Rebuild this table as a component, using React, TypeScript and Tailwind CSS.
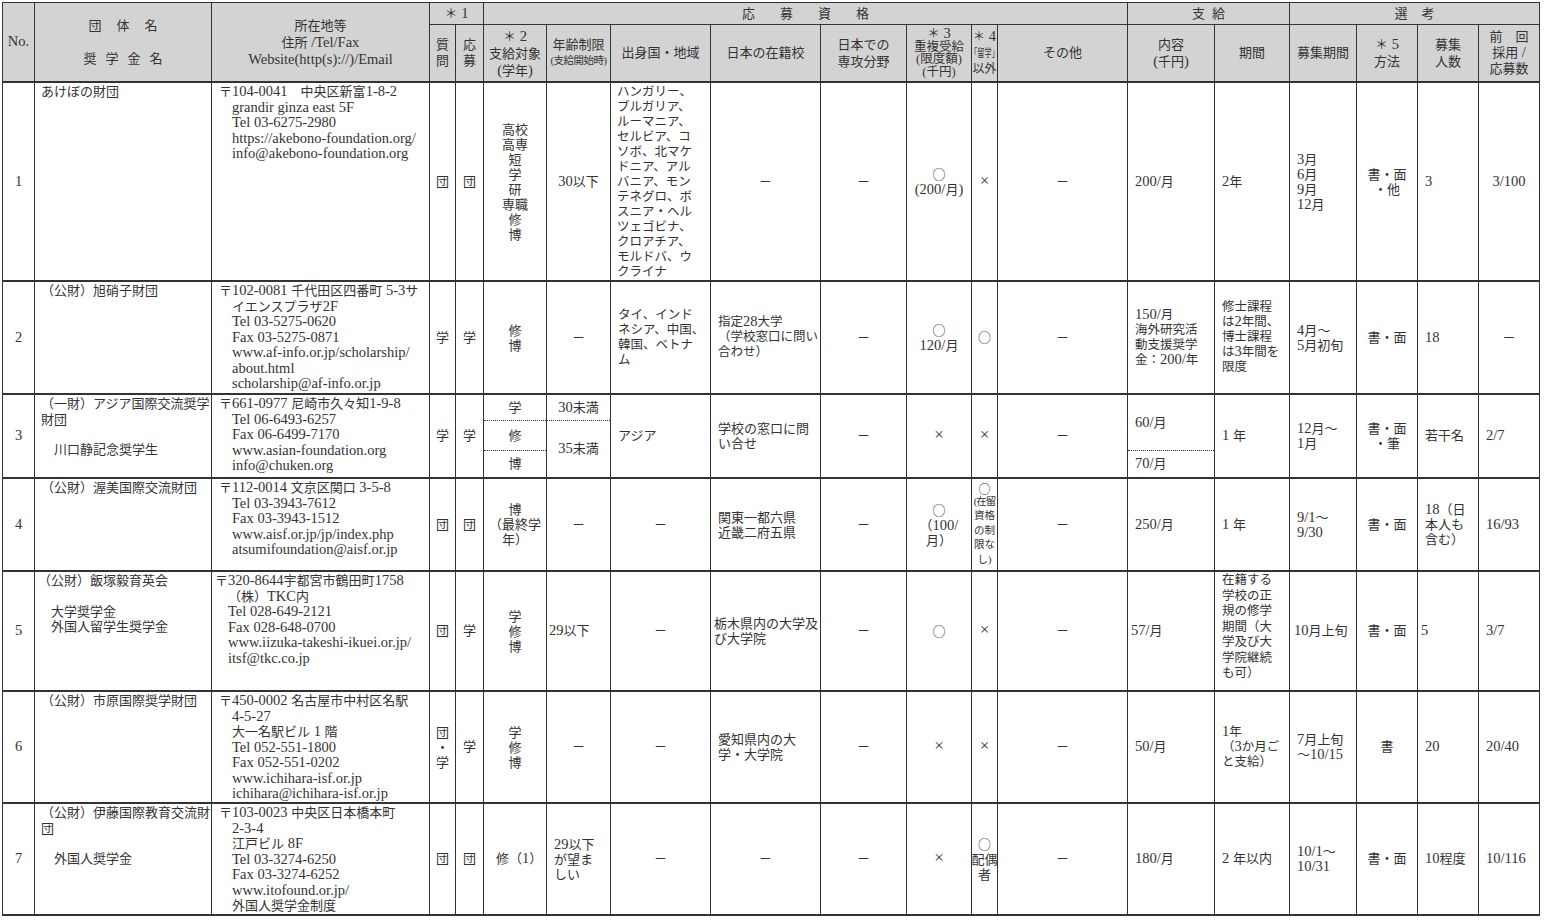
import React from "react";

type P = { c?: string; children?: React.ReactNode };

const CJK = /^[\u3000-\u30ff\u4e00-\u9fff\uff00-\uffef]+$/;

function T(s: string): React.ReactNode {
  const parts = s.split(/(○|×|[\u3000-\u30ff\u4e00-\u9fff\uff00-\uffef]+)/).filter((p) => p !== "");
  return parts.map((p, i) => {
    if (p === "○") {
      return (
        <span key={i} className="font-['Noto_Sans_CJK_JP']">
          ○
        </span>
      );
    }
    if (p === "×") {
      return (
        <span key={i} className="text-[17px] leading-[10px]">
          ×
        </span>
      );
    }
    if (CJK.test(p)) return <React.Fragment key={i}>{p}</React.Fragment>;
    return (
      <span key={i} className="text-[14.5px] leading-[10px]">
        {p}
      </span>
    );
  });
}

function tx(children: React.ReactNode) {
  return typeof children === "string" ? <div className="whitespace-pre">{T(children)}</div> : children;
}

function H({ c = "", children }: P) {
  return (
    <div className={"flex flex-col items-center justify-center text-center bg-[#d3d3d3] border-r border-[#333] " + c}>
      {tx(children)}
    </div>
  );
}

function B({ c = "", children }: P) {
  return <div className={"flex flex-col border-r border-b-2 border-[#333] overflow-hidden " + c}>{tx(children)}</div>;
}

function Ls({ lines }: { lines: string[] }) {
  return (
    <>
      {lines.map((l, i) => (
        <div key={i} className="whitespace-pre">
          {T(l)}
        </div>
      ))}
    </>
  );
}

const CC = "items-center justify-center text-center";
const LC = "justify-center pl-[7px]";
const TL = "pl-[6px] pt-[1px]";

function Addr({ first, rest, c = "pl-[7px]" }: { first: string; rest: string[]; c?: string }) {
  return (
    <B c={"pt-[1px] leading-[15.5px] " + c}>
      <div className="whitespace-pre">{T(first)}</div>
      <div className="pl-[13px]">
        <Ls lines={rest} />
      </div>
    </B>
  );
}

function Name({ lines, sub = [], c = TL }: { lines: string[]; sub?: string[]; c?: string }) {
  return (
    <B c={c}>
      <Ls lines={lines} />
      {sub.length > 0 && (
        <div className="pl-[13px] mt-[15px]">
          <Ls lines={sub} />
        </div>
      )}
    </B>
  );
}

function No({ n }: { n: string }) {
  return <B c={CC}>{n}</B>;
}

function Dash() {
  return <B c={CC}>－</B>;
}

function Sp({ chars, gap }: { chars: string[]; gap: string }) {
  return (
    <div className={"flex " + gap}>
      {chars.map((ch, i) => (
        <span key={i}>{ch}</span>
      ))}
    </div>
  );
}

export default function App() {
  return (
    <div className="w-[1544px] h-[921px] bg-white pt-[2px] pl-[2px] text-[#333] text-[13px] leading-[15.5px] font-['Liberation_Serif','Noto_Sans_CJK_JP',serif]">
      <div className="grid w-[1538px] border-l border-t border-[#333] grid-cols-[32px_177px_218px_26px_28px_63px_64px_100px_110px_86px_65px_26px_130px_87px_75px_67px_61px_61px_61px] grid-rows-[22px_58px_199px_113px_84px_93px_120px_112px_112px]">
        {/* header row 1 */}
        <H c="row-span-2 border-b-2">No.</H>
        <H c="row-span-2 border-b-2">
          <Sp chars={["団", "体", "名"]} gap="gap-[15px]" />
          <div className="mt-[17px]">
            <Sp chars={["奨", "学", "金", "名"]} gap="gap-[9px]" />
          </div>
        </H>
        <H c="row-span-2 border-b-2 leading-[17px]">
          <Ls lines={["所在地等", "住所 /Tel/Fax", "Website(http(s)://)/Email"]} />
        </H>
        <H c="col-span-2 border-b">＊ 1</H>
        <H c="col-span-8 border-b">
          <Sp chars={["応", "募", "資", "格"]} gap="gap-[25px]" />
        </H>
        <H c="col-span-2 border-b">
          <Sp chars={["支", "給"]} gap="gap-[7px]" />
        </H>
        <H c="col-span-4 border-b">
          <Sp chars={["選", "考"]} gap="gap-[14px]" />
        </H>
        {/* header row 2 */}
        <H c="border-b-2 leading-[16px]">
          <Ls lines={["質", "問"]} />
        </H>
        <H c="border-b-2 leading-[16px]">
          <Ls lines={["応", "募"]} />
        </H>
        <H c="border-b-2 leading-[17px]">
          <Ls lines={["＊ 2", "支給対象", "(学年)"]} />
        </H>
        <H c="border-b-2 leading-[16px]">
          <div>年齢制限</div>
          <div className="text-[10.5px] tracking-[-0.5px]">(支給開始時)</div>
        </H>
        <H c="border-b-2">出身国・地域</H>
        <H c="border-b-2">日本の在籍校</H>
        <H c="border-b-2 leading-[17px]">
          <Ls lines={["日本での", "専攻分野"]} />
        </H>
        <H c="border-b-2 leading-[12.5px] text-[12.5px]">
          <div>{T("＊ 3")}</div>
          <div>重複受給</div>
          <div>(限度額)</div>
          <div>(千円)</div>
        </H>
        <H c="border-b-2 leading-[16px] text-[12px]">
          <div className="whitespace-pre">{T("＊ 4")}</div>
          <div className="whitespace-nowrap scale-x-[0.65] text-[11px]">｢留学｣</div>
          <div>以外</div>
        </H>
        <H c="border-b-2">その他</H>
        <H c="border-b-2 leading-[17px]">
          <Ls lines={["内容", "(千円)"]} />
        </H>
        <H c="border-b-2">期間</H>
        <H c="border-b-2">募集期間</H>
        <H c="border-b-2 leading-[17px]">
          <Ls lines={["＊ 5", "方法"]} />
        </H>
        <H c="border-b-2 leading-[17px]">
          <Ls lines={["募集", "人数"]} />
        </H>
        <H c="border-b-2 leading-[16px]">
          <Ls lines={["前　回", "採用 /", "応募数"]} />
        </H>

        {/* row 1 */}
        <No n="1" />
        <Name lines={["あけぼの財団"]} />
        <Addr
          first="〒104-0041　中央区新富1-8-2"
          rest={["grandir ginza east 5F", "Tel 03-6275-2980", "https://akebono-foundation.org/", "info@akebono-foundation.org"]}
        />
        <B c={CC}>団</B>
        <B c={CC}>団</B>
        <B c={CC + " leading-[15px]"}>
          <Ls lines={["高校", "高専", "短", "学", "研", "専職", "修", "博"]} />
        </B>
        <B c={CC}>30以下</B>
        <B c="pl-[6px] pt-[2px] leading-[15px] text-[12.5px]">
          <Ls
            lines={[
              "ハンガリー、",
              "ブルガリア、",
              "ルーマニア、",
              "セルビア、コ",
              "ソボ、北マケ",
              "ドニア、アル",
              "バニア、モン",
              "テネグロ、ボ",
              "スニア・ヘル",
              "ツェゴビナ、",
              "クロアチア、",
              "モルドバ、ウ",
              "クライナ",
            ]}
          />
        </B>
        <Dash />
        <Dash />
        <B c={CC}>
          <Ls lines={["○", "(200/月)"]} />
        </B>
        <B c={CC}>×</B>
        <Dash />
        <B c={LC}>200/月</B>
        <B c={LC}>2年</B>
        <B c={LC + " leading-[15px]"}>
          <Ls lines={["3月", "6月", "9月", "12月"]} />
        </B>
        <B c={CC + " leading-[15px]"}>
          <Ls lines={["書・面", "・他"]} />
        </B>
        <B c={LC}>3</B>
        <B c={CC}>3/100</B>

        {/* row 2 */}
        <No n="2" />
        <Name lines={["（公財）旭硝子財団"]} />
        <Addr
          first="〒102-0081 千代田区四番町 5-3サ"
          rest={[
            "イエンスプラザ2F",
            "Tel 03-5275-0620",
            "Fax 03-5275-0871",
            "www.af-info.or.jp/scholarship/",
            "about.html",
            "scholarship@af-info.or.jp",
          ]}
        />
        <B c={CC}>学</B>
        <B c={CC}>学</B>
        <B c={CC + " leading-[15px]"}>
          <Ls lines={["修", "博"]} />
        </B>
        <Dash />
        <B c={LC + " pl-[6px] leading-[15px] text-[12.5px]"}>
          <Ls lines={["タイ、インド", "ネシア、中国、", "韓国、ベトナ", "ム"]} />
        </B>
        <B c={LC + " leading-[15px] text-[12.5px]"}>
          <Ls lines={["指定28大学", "（学校窓口に問い", "合わせ）"]} />
        </B>
        <Dash />
        <B c={CC}>
          <Ls lines={["○", "120/月"]} />
        </B>
        <B c={CC}>○</B>
        <Dash />
        <B c={LC + " leading-[15px] text-[12.5px]"}>
          <Ls lines={["150/月", "海外研究活", "動支援奨学", "金：200/年"]} />
        </B>
        <B c={LC + " leading-[15px] text-[12.5px]"}>
          <Ls lines={["修士課程", "は2年間、", "博士課程", "は3年間を", "限度"]} />
        </B>
        <B c={LC + " leading-[15px]"}>
          <Ls lines={["4月～", "5月初旬"]} />
        </B>
        <B c={CC}>書・面</B>
        <B c={LC}>18</B>
        <Dash />

        {/* row 3 */}
        <No n="3" />
        <Name lines={["（一財）アジア国際交流奨学", "財団"]} sub={["川口静記念奨学生"]} />
        <Addr
          first="〒661-0977 尼崎市久々知1-9-8"
          rest={["Tel 06-6493-6257", "Fax 06-6499-7170", "www.asian-foundation.org", "info@chuken.org"]}
        />
        <B c={CC}>学</B>
        <B c={CC}>学</B>
        <B c="text-center">
          <div className="h-[26px] flex items-center justify-center border-b border-dotted border-[#333]">学</div>
          <div className="h-[30px] flex items-center justify-center border-b border-dotted border-[#333]">修</div>
          <div className="flex-1 flex items-center justify-center">博</div>
        </B>
        <B c="text-center">
          <div className="h-[26px] flex items-center justify-center border-b border-dotted border-[#333]">
            <div>{T("30未満")}</div>
          </div>
          <div className="flex-1 flex items-center justify-center">
            <div>{T("35未満")}</div>
          </div>
        </B>
        <B c={LC + " pl-[6px]"}>アジア</B>
        <B c={LC + " leading-[15px]"}>
          <Ls lines={["学校の窓口に問", "い合せ"]} />
        </B>
        <Dash />
        <B c={CC}>×</B>
        <B c={CC}>×</B>
        <Dash />
        <B>
          <div className="h-[56px] flex items-center pl-[7px] border-b border-dotted border-[#333]">
            <div>{T("60/月")}</div>
          </div>
          <div className="flex-1 flex items-center pl-[7px]">
            <div>{T("70/月")}</div>
          </div>
        </B>
        <B c={LC}>1 年</B>
        <B c={LC + " leading-[15px]"}>
          <Ls lines={["12月～", "1月"]} />
        </B>
        <B c={CC + " leading-[15px]"}>
          <Ls lines={["書・面", "・筆"]} />
        </B>
        <B c={LC}>若干名</B>
        <B c={LC}>2/7</B>

        {/* row 4 */}
        <No n="4" />
        <Name lines={["（公財）渥美国際交流財団"]} />
        <Addr
          first="〒112-0014 文京区関口 3-5-8"
          rest={["Tel 03-3943-7612", "Fax 03-3943-1512", "www.aisf.or.jp/jp/index.php", "atsumifoundation@aisf.or.jp"]}
        />
        <B c={CC}>団</B>
        <B c={CC}>団</B>
        <B c={CC + " leading-[15px]"}>
          <Ls lines={["博", "（最終学", "年）"]} />
        </B>
        <Dash />
        <Dash />
        <B c={LC + " leading-[15px]"}>
          <Ls lines={["関東一都六県", "近畿二府五県"]} />
        </B>
        <Dash />
        <B c={CC + " leading-[15px]"}>
          <Ls lines={["○", "（100/", "月）"]} />
        </B>
        <B c={CC + " leading-[14.4px] text-[10.5px]"}>
          <div className="font-['Noto_Sans_CJK_JP'] text-[12px] leading-[13px]">○</div>
          <div className="whitespace-nowrap tracking-[-1px]">(在留</div>
          <div>資格</div>
          <div>の制</div>
          <div>限な</div>
          <div className="whitespace-nowrap">し)</div>
        </B>
        <Dash />
        <B c={LC}>250/月</B>
        <B c={LC}>1 年</B>
        <B c={LC + " leading-[15px]"}>
          <Ls lines={["9/1～", "9/30"]} />
        </B>
        <B c={CC}>書・面</B>
        <B c={LC + " leading-[15px]"}>
          <Ls lines={["18（日", "本人も", "含む）"]} />
        </B>
        <B c={LC}>16/93</B>

        {/* row 5 */}
        <No n="5" />
        <Name c="pl-[3px] pt-[1px]" lines={["（公財）飯塚毅育英会"]} sub={["大学奨学金", "外国人留学生奨学金"]} />
        <Addr
          c="pl-[3px]"
          first="〒320-8644宇都宮市鶴田町1758"
          rest={["（株）TKC内", "Tel 028-649-2121", "Fax 028-648-0700", "www.iizuka-takeshi-ikuei.or.jp/", "itsf@tkc.co.jp"]}
        />
        <B c={CC}>団</B>
        <B c={CC}>学</B>
        <B c={CC + " leading-[15px]"}>
          <Ls lines={["学", "修", "博"]} />
        </B>
        <B c="justify-center pl-[2px]">29以下</B>
        <Dash />
        <B c="justify-center pl-[3px] leading-[15px]">
          <Ls lines={["栃木県内の大学及", "び大学院"]} />
        </B>
        <Dash />
        <B c={CC}>○</B>
        <B c={CC}>×</B>
        <Dash />
        <B c="justify-center pl-[3px]">57/月</B>
        <B c="pl-[7px] pt-[1px] leading-[15.5px] text-[12.5px]">
          <Ls lines={["在籍する", "学校の正", "規の修学", "期間（大", "学及び大", "学院継続", "も可）"]} />
        </B>
        <B c="justify-center pl-[4px]">10月上旬</B>
        <B c={CC}>書・面</B>
        <B c="justify-center pl-[3px]">5</B>
        <B c={LC}>3/7</B>

        {/* row 6 */}
        <No n="6" />
        <Name lines={["（公財）市原国際奨学財団"]} />
        <Addr
          first="〒450-0002 名古屋市中村区名駅"
          rest={["4-5-27", "大一名駅ビル 1 階", "Tel 052-551-1800", "Fax 052-551-0202", "www.ichihara-isf.or.jp", "ichihara@ichihara-isf.or.jp"]}
        />
        <B c={CC + " leading-[15px]"}>
          <Ls lines={["団", "・", "学"]} />
        </B>
        <B c={CC}>学</B>
        <B c={CC + " leading-[15px]"}>
          <Ls lines={["学", "修", "博"]} />
        </B>
        <Dash />
        <Dash />
        <B c={LC + " leading-[15px]"}>
          <Ls lines={["愛知県内の大", "学・大学院"]} />
        </B>
        <Dash />
        <B c={CC}>×</B>
        <B c={CC}>×</B>
        <Dash />
        <B c={LC}>50/月</B>
        <B c={LC + " leading-[15px] text-[12.5px]"}>
          <Ls lines={["1年", "（3か月ご", "と支給）"]} />
        </B>
        <B c={LC + " leading-[15px]"}>
          <Ls lines={["7月上旬", "～10/15"]} />
        </B>
        <B c={CC}>書</B>
        <B c={LC}>20</B>
        <B c={LC}>20/40</B>

        {/* row 7 */}
        <No n="7" />
        <Name lines={["（公財）伊藤国際教育交流財", "団"]} sub={["外国人奨学金"]} />
        <Addr
          first="〒103-0023 中央区日本橋本町"
          rest={["2-3-4", "江戸ビル 8F", "Tel 03-3274-6250", "Fax 03-3274-6252", "www.itofound.or.jp/", "外国人奨学金制度"]}
        />
        <B c={CC}>団</B>
        <B c={CC}>団</B>
        <B c={LC + " pl-[12px]"}>修（1）</B>
        <B c={LC + " pl-[6px] leading-[15px]"}>
          <Ls lines={["29以下", "が望ま", "しい"]} />
        </B>
        <Dash />
        <Dash />
        <Dash />
        <B c={CC}>×</B>
        <B c={CC + " leading-[15px]"}>
          <Ls lines={["○", "配偶", "者"]} />
        </B>
        <Dash />
        <B c={LC}>180/月</B>
        <B c={LC}>2 年以内</B>
        <B c={LC + " leading-[15px]"}>
          <Ls lines={["10/1～", "10/31"]} />
        </B>
        <B c={CC}>書・面</B>
        <B c={LC}>10程度</B>
        <B c={LC}>10/116</B>
      </div>
    </div>
  );
}
